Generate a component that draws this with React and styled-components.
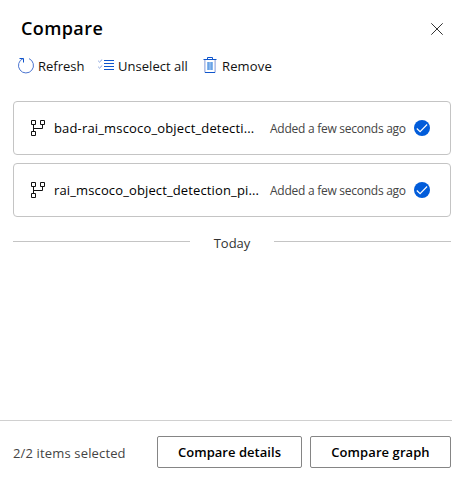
import React from "react";
import styled, { createGlobalStyle } from "styled-components";

const GlobalStyle = createGlobalStyle`
  * { box-sizing: border-box; }
  body {
    margin: 0;
    background: #fff;
    color: #000;
    font-family: "Segoe UI", "Open Sans", "Noto Sans", sans-serif;
    font-size: 13px;
  }
  svg { display: block; flex: none; }
`;

const Panel = styled.section`
  display: flex;
  flex-direction: column;
  width: 452px;
  height: 479px;
  overflow: hidden;
  white-space: nowrap;
`;

const Header = styled.header`
  display: flex;
  align-items: center;
  justify-content: space-between;
  height: 50px;
  padding: 7px 9px 0 21px;
`;

const Title = styled.h2`
  margin: 0;
  padding-bottom: 2px;
  font-size: 18px;
  line-height: 24px;
  font-weight: 600;
  letter-spacing: 0.4px;
`;

const IconButton = styled.button`
  padding: 0;
  border: 0;
  background: none;
`;

const Toolbar = styled.div`
  display: flex;
  height: 51px;
  padding-left: 18px;
`;

const Command = styled.button`
  display: flex;
  align-items: center;
  gap: ${(p) => p.$gap}px;
  width: ${(p) => p.$width}px;
  height: 32px;
  padding: 0;
  border: 0;
  background: none;
  color: #111;
  font: inherit;
  letter-spacing: ${(p) => p.$spacing}px;
`;

const List = styled.div`
  display: flex;
  flex-direction: column;
  gap: 8px;
  padding: 0 1px 0 13px;
`;

const Card = styled.article`
  display: flex;
  align-items: center;
  height: 54px;
  padding: 0 20px 0 17px;
  border: 1px solid #c4c4c4;
  border-radius: 4px;
`;

const Name = styled.span`
  width: 206px;
  margin-left: 9px;
  overflow: hidden;
  letter-spacing: ${(p) => p.$spacing}px;
`;

const Added = styled.span`
  width: 144px;
  margin-left: 10px;
  color: #444;
  font-size: 12px;
  letter-spacing: -0.26px;
`;

const Divider = styled.div`
  display: flex;
  align-items: center;
  height: 20px;
  margin: 15px 1px 0 13px;
  color: #333;
`;

const Rule = styled.span`
  flex: 1;
  height: 1px;
  margin-bottom: 2px;
  background: #c4c4c4;
`;

const DayLabel = styled.span`
  width: 84px;
  padding-top: 2px;
  text-align: center;
`;

const Footer = styled.footer`
  display: flex;
  align-items: center;
  gap: 8px;
  height: 59px;
  margin-top: auto;
  padding: 3px 1px 0 13px;
  border-top: 1px solid #d0d0d0;
`;

const Count = styled.span`
  flex: 1;
  padding-top: 2px;
  color: #444;
  letter-spacing: 0.15px;
`;

const Action = styled.button`
  width: ${(p) => p.$width}px;
  height: 32px;
  padding: 0;
  border: 1px solid #858585;
  border-radius: 2px;
  background: #fff;
  color: #000;
  font: inherit;
  font-weight: 600;
  letter-spacing: ${(p) => p.$spacing}px;
`;

const CloseIcon = () => (
  <svg width="12" height="12" viewBox="0 0 12 12" stroke="#333" fill="none">
    <path d="M.3.3l11.4 11.4M11.7.3L.3 11.7" />
  </svg>
);

const RefreshIcon = () => (
  <svg width="16" height="18" viewBox="0 0 16 18" stroke="#4a74d0" fill="none">
    <path d="M11 1.6A7.5 7.5 0 1 1 5.2 1.5" />
    <path d="M1.5 1.5H5.5V5.5" stroke="#0f55cc" />
  </svg>
);

const ChecklistIcon = () => (
  <svg width="16" height="14" viewBox="0 0 16 14" stroke="#0f55cc" fill="none">
    <path d="M6 1.5h10M6 4.5h10M6 7.5h10M6 10.5h10" />
    <path d="M.2 1.8l1.3 1.3L4.2.5M.2 7.8l1.3 1.3 2.7-2.6" stroke="#6288d4" strokeWidth=".8" />
  </svg>
);

const TrashIcon = () => (
  <svg width="14" height="18" viewBox="0 0 14 18" fill="none">
    <path d="M4 5h6v8h-6z" fill="#86b7ee" />
    <path d="M1.9 3v12.5M12.1 3v12.5" stroke="#8299d8" />
    <path d="M.5 2.5h13M4.5 2V.5h5V2M2 15.5h10" stroke="#0f55cc" />
    <path d="M5.5 5v8M8.5 5v8" stroke="#6ca2e3" />
  </svg>
);

const PipelineIcon = () => (
  <svg width="14" height="16" viewBox="0 0 14 16" stroke="#111" fill="none">
    <path d="M.5.5h4v4h-4zM9.5.5h4v4h-4zM.5 11.5h4v4h-4zM2.5 5v6M3 8.5h8.5V5" />
  </svg>
);

const CheckedIcon = () => (
  <svg width="16" height="16" viewBox="0 0 16 16" fill="none">
    <circle cx="8" cy="8" r="8" fill="#015cda" />
    <path d="M2.8 8.5l3.3 3.2 7-7.2" stroke="#fff" strokeWidth="1.15" />
  </svg>
);

const jobs = [
  { name: "bad-rai_mscoco_object_detecti...", spacing: 0.16 },
  { name: "rai_mscoco_object_detection_pi...", spacing: 0.13 },
];

export default function App() {
  return (
    <>
      <GlobalStyle />
      <Panel>
        <Header>
          <Title>Compare</Title>
          <IconButton aria-label="Close"><CloseIcon /></IconButton>
        </Header>
        <Toolbar>
          <Command $gap={4} $width={80} $spacing={0}><RefreshIcon />Refresh</Command>
          <Command $gap={4} $width={105} $spacing={0.03}><ChecklistIcon />Unselect all</Command>
          <Command $gap={5} $width={80} $spacing={0.15}><TrashIcon />Remove</Command>
        </Toolbar>
        <List>
          {jobs.map((job) => (
            <Card key={job.name}>
              <PipelineIcon />
              <Name $spacing={job.spacing}>{job.name}</Name>
              <Added>Added a few seconds ago</Added>
              <CheckedIcon />
            </Card>
          ))}
        </List>
        <Divider><Rule /><DayLabel>Today</DayLabel><Rule /></Divider>
        <Footer>
          <Count>2/2 items selected</Count>
          <Action $width={145} $spacing={0.03}>Compare details</Action>
          <Action $width={141} $spacing={0.08}>Compare graph</Action>
        </Footer>
      </Panel>
    </>
  );
}
